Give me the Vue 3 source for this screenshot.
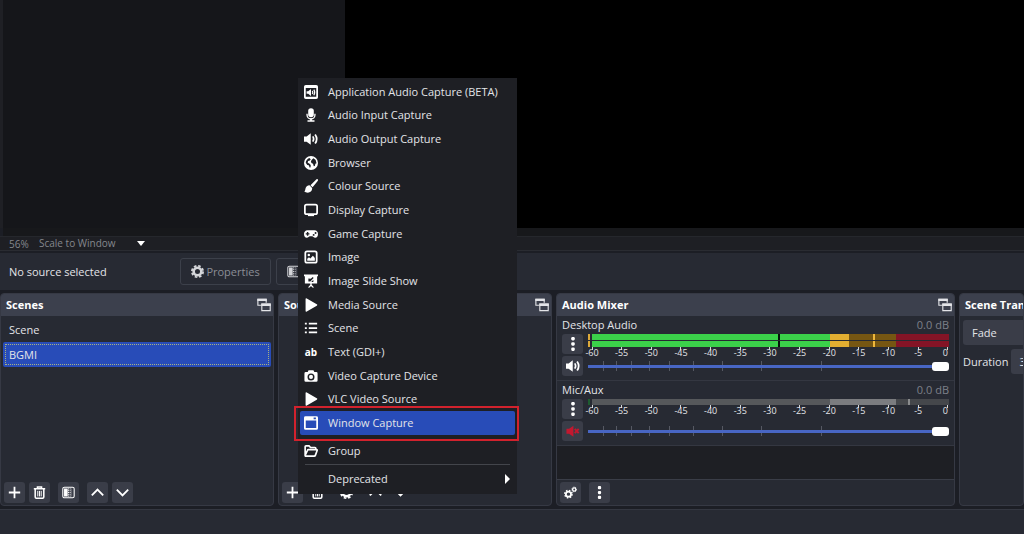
<script setup>
import { ref } from 'vue'

const scenes = ['Scene', 'BGMI']
const currentScene = ref('BGMI')
const highlighted = ref('Window Capture')

const sources = [
  { name: 'Application Audio Capture (BETA)', icon: 'appAudio' },
  { name: 'Audio Input Capture', icon: 'mic' },
  { name: 'Audio Output Capture', icon: 'speaker' },
  { name: 'Browser', icon: 'globe' },
  { name: 'Colour Source', icon: 'brush' },
  { name: 'Display Capture', icon: 'display' },
  { name: 'Game Capture', icon: 'gamepad' },
  { name: 'Image', icon: 'image' },
  { name: 'Image Slide Show', icon: 'slides' },
  { name: 'Media Source', icon: 'play' },
  { name: 'Scene', icon: 'list' },
  { name: 'Text (GDI+)', icon: 'text' },
  { name: 'Video Capture Device', icon: 'camera' },
  { name: 'VLC Video Source', icon: 'play' },
  { name: 'Window Capture', icon: 'window' },
]

const icons = {
  appAudio:
    '<path fill-rule="evenodd" d="M2 0h12a2 2 0 0 1 2 2v12a2 2 0 0 1-2 2H2a2 2 0 0 1-2-2V2a2 2 0 0 1 2-2zM2 3.500v10h12v-10z"/><path d="M3 7h1.800L8 4.500v8L4.800 10H3z"/><path d="M9.400 6.700q1.300 1.800 0 3.600M11.200 5.300q2.200 3.200 0 6.400" fill="none" stroke="currentColor" stroke-width="1.300"/>',
  mic:
    '<rect x="4.800" y="0.300" width="6.400" height="10.400" rx="3.200"/><path d="M3.500 6.500v1.500a4.500 4.500 0 0 0 9 0V6.500" fill="none" stroke="currentColor" stroke-width="1.500"/><path d="M7 12h2v2h3v1.700H4V14h3z"/>',
  speaker:
    '<path d="M0 5h3L7.700 1.500v13L3 11H0z"/><path d="M10 5q2 3 0 6M12.700 2.800q3.600 5.200 0 10.400" fill="none" stroke="currentColor" stroke-width="2"/>',
  muted:
    '<path d="M.5 5.500h3L8.500 2v12.500L3.500 11h-3z"/><path d="M10 5.500l4.500 5M14.500 5.500l-4.500 5" fill="none" stroke="currentColor" stroke-width="2.200"/>',
  globe:
    '<path fill-rule="evenodd" d="M8 0a8 8 0 1 1 0 16A8 8 0 0 1 8 0zM6.200 2.200C3.800 3 2 5.300 2 7.700l1.700 2.500 1.700.3 1.200 2.800.9-.5.200-2.400L6 8.500l-1.800-.7.500-2 2-.6 1-1.400zM9 4.200l1.800-1.700 2.500 2.200 1 3.600-1.300.6-.6 2.600-1.200.3-.9-3-1.800-.7-.6-2z"/>',
  brush:
    '<path d="M15.600.4c.7.700.4 1.600-.2 2.300L9.800 9.400 7.400 7l6.300-6.200c.5-.6 1.300-1 1.900-.4zM6.300 7.200l3 3.200c.3 3-2.100 5.200-4.900 5.200-1.700 0-3.400-.6-4.100-1.600 1.500-.5 1-2.300 1.700-3.900.8-1.700 2.600-3.200 4.300-2.900z"/>',
  display:
    '<rect x="1" y="1.800" width="14" height="11" rx="2" fill="none" stroke="currentColor" stroke-width="2"/><path d="M4.500 13h7v2h-7z"/>',
  gamepad:
    '<path fill-rule="evenodd" d="M4 3.700h8c2.600 0 4 2 4 4.300s-1.200 4.300-3.200 4.300c-1.700 0-2.500-1.600-3.500-1.600H6.700c-1 0-1.800 1.600-3.500 1.600C1.200 12.300 0 10.300 0 8s1.400-4.300 4-4.300zM3.300 5.800v1.300H2v1.600h1.300V10h1.600V8.700h1.300V7.100H4.900V5.800zM11 7.900a1.100 1.100 0 1 0 0 2.200 1.100 1.100 0 0 0 0-2.200zm2.200-2.200a1.100 1.100 0 1 0 0 2.200 1.100 1.100 0 0 0 0-2.200z"/>',
  image:
    '<rect x="1.500" y="1.500" width="13" height="13" rx="2" fill="none" stroke="currentColor" stroke-width="2"/><circle cx="5.500" cy="5.600" r="1.400"/><path d="M3.700 12.300V10l2-1.700 1.500 1.400 3-3 2.200 2.300v3.300z"/>',
  slides:
    '<path fill-rule="evenodd" d="M0 .5h16v2h-1v8.300H1V2.500H0zM5 5v3.700h2.200L11 4.500l-1-1-2.200 2zm3.200 4h2.500V6.600z"/><path d="M7.200 10h1.600v2.200l2.700 3.300H9.600L8 13.700l-1.600 1.800H4.500l2.700-3.300z"/>',
  play: '<path d="M1.800 1.300q0-1.600 1.400-.8l11.400 6.700q1.200.8 0 1.600L3.200 15.500q-1.400.8-1.400-.8z"/>',
  list: '<path d="M1 2h2.200v2H1zM1 7h2.200v2H1zM1 12h2.200v2H1zM5.500 2H15v2H5.500zM5.500 7H15v2H5.500zM5.500 12H15v2H5.500z"/>',
  camera:
    '<path fill-rule="evenodd" d="M5.200 1.500h5.600l1 2H14q1.500 0 1.500 1.500v8q0 1.500-1.500 1.500H2Q.5 14.500.500 13V5Q.5 3.500 2 3.500h2.200zM8 5a4 4 0 1 0 0 8 4 4 0 0 0 0-8z"/><circle cx="8" cy="9" r="2.300"/>',
  window:
    '<path fill-rule="evenodd" d="M1.800.3h12.400Q16 .3 16 2v12q0 1.800-1.800 1.800H1.800Q0 15.800 0 14V2Q0 .3 1.800.3zM2 5.200V13.800h12V5.200zM11 1.700v2h2.600v-2z"/>',
  folder:
    '<path d="M1.300 13V3.200q0-1 1-1h3.500L7.500 4h5q1 0 1 1v1.500M1.300 13l2.500-5.500q.4-1 1.400-1h9.300q.8 0 .5.900l-1.900 5.300q-.4 1.200-1.500 1.200H2q-.7 0-.7-.9z" fill="none" stroke="currentColor" stroke-width="1.900" stroke-linejoin="round"/>',
  plus: '<path d="M8 1v14M1 8h14" fill="none" stroke="currentColor" stroke-width="2.200"/>',
  trash:
    '<path d="M1 3.300h14M5.500 2.800V1.200h5v1.600M2.700 4v9.500q0 1.500 1.500 1.500h7.600q1.500 0 1.500-1.500V4" fill="none" stroke="currentColor" stroke-width="1.900"/><path d="M5.900 6v6.800M8 6v6.800M10.100 6v6.800" fill="none" stroke="currentColor" stroke-width="1.200"/>',
  filter:
    '<rect x="1" y="1.500" width="14" height="13" rx="2" fill="none" stroke="currentColor" stroke-width="1.300"/><path d="M2.500 3H7v10H2.500z"/><path d="M8 3v10M10 3v10" fill="none" stroke="currentColor" stroke-width="1.200" stroke-dasharray="1.200 1"/><path d="M11.500 3v10" stroke="currentColor" opacity=".3"/>',
  up: '<path d="M1 11.500l7-7 7 7" fill="none" stroke="currentColor" stroke-width="2.300"/>',
  down: '<path d="M1 4.500l7 7 7-7" fill="none" stroke="currentColor" stroke-width="2.300"/>',
  gear:
    '<circle cx="8" cy="8" r="4.700" fill="none" stroke="currentColor" stroke-width="3.200"/><circle cx="8" cy="8" r="6.900" fill="none" stroke="currentColor" stroke-width="2.200" stroke-dasharray="3.200 2.219"/>',
  gears:
    '<circle cx="5.500" cy="10" r="3.200" fill="none" stroke="currentColor" stroke-width="2.200"/><circle cx="5.500" cy="10" r="4.600" fill="none" stroke="currentColor" stroke-width="1.800" stroke-dasharray="1.800 1.813"/><circle cx="12.600" cy="4.200" r="2" fill="none" stroke="currentColor" stroke-width="1.600"/><circle cx="12.600" cy="4.200" r="2.900" fill="none" stroke="currentColor" stroke-width="1.200" stroke-dasharray="1.139 1.139"/>',
  dots: '<rect x="6" y="0" width="4" height="4" rx="1.300"/><rect x="6" y="6" width="4" height="4" rx="1.300"/><rect x="6" y="12" width="4" height="4" rx="1.300"/>',
  popout:
    '<path d="M4.500 8.300H1V1.500h9.500v4" fill="none" stroke="currentColor" stroke-width="1.300"/><path d="M.4.800h10.700v2.700H.4z"/><path d="M5.500 7h9.600v7.500H5.500z" fill="none" stroke="currentColor" stroke-width="1.300"/><path d="M4.900 6.300h10.900V9H4.900z"/>',
}

const scale = ['-60', '-55', '-50', '-45', '-40', '-35', '-30', '-25', '-20', '-15', '-10', '-5', '0']
const notches = [4.2, 7.8, 12, 16.8, 22.5, 29, 37.2, 48, 64.6]
const channels = ref([
  { id: 'desktop', name: 'Desktop Audio', muted: false, volume: 100 },
  { id: 'mic', name: 'Mic/Aux', muted: true, volume: 100 },
])
</script>

<template>
  <div class="app">
    <main class="preview">
      <div class="margin"></div>
      <div class="canvas"></div>
    </main>
    <div class="scroll"></div>

    <div class="zoom">
      <span class="percent">56%</span>
      <select class="scaling" aria-label="Preview scaling">
        <option>Scale to Window</option>
      </select>
      <span class="caret"></span>
    </div>

    <section class="context">
      <span class="status">No source selected</span>
      <button class="outlined properties" type="button">
        <svg viewBox="0 0 16 16" v-html="icons.gear"></svg>Properties
      </button>
      <button class="outlined filters" type="button" aria-label="Filters">
        <svg viewBox="0 0 16 16" v-html="icons.filter"></svg>
      </button>
    </section>

    <div class="docks">
      <section class="dock">
        <header>
          <h2>Scenes</h2>
          <svg viewBox="0 0 16 16" v-html="icons.popout"></svg>
        </header>
        <div class="scenes">
          <button
            v-for="s in scenes"
            :key="s"
            type="button"
            :class="{ selected: s === currentScene }"
            @click="currentScene = s"
          ><span>{{ s }}</span></button>
        </div>
        <footer>
          <button type="button" aria-label="Add scene"><svg viewBox="0 0 16 16" v-html="icons.plus"></svg></button>
          <button type="button" aria-label="Remove scene"><svg viewBox="0 0 16 16" v-html="icons.trash"></svg></button>
          <button class="group" type="button" aria-label="Scene filters"><svg viewBox="0 0 16 16" v-html="icons.filter"></svg></button>
          <button class="group" type="button" aria-label="Move scene up"><svg viewBox="0 0 16 16" v-html="icons.up"></svg></button>
          <button type="button" aria-label="Move scene down"><svg viewBox="0 0 16 16" v-html="icons.down"></svg></button>
        </footer>
      </section>

      <section class="dock">
        <header>
          <h2>Sources</h2>
          <svg viewBox="0 0 16 16" v-html="icons.popout"></svg>
        </header>
        <div class="fill"></div>
        <footer class="plain">
          <button class="raised" type="button" aria-label="Add source"><svg viewBox="0 0 16 16" v-html="icons.plus"></svg></button>
          <button type="button" aria-label="Remove source"><svg viewBox="0 0 16 16" v-html="icons.trash"></svg></button>
          <button class="group" type="button" aria-label="Source properties"><svg viewBox="0 0 16 16" v-html="icons.gear"></svg></button>
          <button class="group" type="button" aria-label="Move source up"><svg viewBox="0 0 16 16" v-html="icons.up"></svg></button>
          <button type="button" aria-label="Move source down"><svg viewBox="0 0 16 16" v-html="icons.down"></svg></button>
        </footer>
      </section>

      <section class="dock mixer">
        <header>
          <h2>Audio Mixer</h2>
          <svg viewBox="0 0 16 16" v-html="icons.popout"></svg>
        </header>
        <div v-for="c in channels" :key="c.id" class="channel" :class="c.id">
          <div class="heading">
            <label :for="c.id">{{ c.name }}</label>
            <span class="db">0.0 dB</span>
          </div>
          <div class="controls">
            <div class="side">
              <button type="button" :aria-label="c.name + ' options'">
                <svg viewBox="0 0 16 16" v-html="icons.dots"></svg>
              </button>
              <button type="button" :class="{ muted: c.muted }" :aria-label="'Mute ' + c.name" @click="c.muted = !c.muted">
                <svg viewBox="0 0 16 16" v-html="c.muted ? icons.muted : icons.speaker"></svg>
              </button>
            </div>
            <div class="levels">
              <div class="meter">
                <i class="clip"></i>
                <i class="bar"></i>
                <i v-if="c.id === 'desktop'" class="clip"></i>
                <i v-if="c.id === 'desktop'" class="bar"></i>
              </div>
              <div class="scale">
                <span v-for="n in scale" :key="n"><b>{{ n }}</b></span>
              </div>
              <div class="fader">
                <i v-for="n in notches" :key="n" :style="{ left: n + '%' }"></i>
                <input :id="c.id" v-model="c.volume" type="range" min="0" max="100" />
              </div>
            </div>
          </div>
        </div>
        <div class="void"></div>
        <footer>
          <button type="button" aria-label="Advanced audio properties"><svg viewBox="0 0 16 16" v-html="icons.gears"></svg></button>
          <button class="group" type="button" aria-label="Mixer menu"><svg viewBox="0 0 16 16" v-html="icons.dots"></svg></button>
        </footer>
      </section>

      <section class="dock transitions">
        <header><h2>Scene Transitions</h2></header>
        <div class="form">
          <select aria-label="Transition"><option>Fade</option></select>
          <div class="duration">
            <label for="duration">Duration</label>
            <input id="duration" type="text" value="300 ms" />
          </div>
        </div>
      </section>
    </div>

    <div class="statusbar"></div>

    <div class="menu" role="menu">
      <div class="types">
        <button
          v-for="s in sources"
          :key="s.name"
          type="button"
          role="menuitem"
          :class="{ active: s.name === highlighted }"
        >
          <b v-if="s.icon === 'text'" class="glyph">ab</b>
          <svg v-else viewBox="0 0 16 16" v-html="icons[s.icon]"></svg>
          <span>{{ s.name }}</span>
        </button>
      </div>
      <button type="button" role="menuitem">
        <svg viewBox="0 0 16 16" v-html="icons.folder"></svg><span>Group</span>
      </button>
      <hr />
      <button class="deprecated" type="button" role="menuitem">
        <span>Deprecated</span><i class="arrow"></i>
      </button>
      <div class="marker"></div>
    </div>
  </div>
</template>

<style>
body {
  background: #1e2026;
}
</style>

<style scoped>
.app {
  position: relative;
  display: flex;
  flex-direction: column;
  height: 100vh;
  overflow: hidden;
  background: #1c1e25;
  color: #e3e4e8;
  font: 11px/16px "Open Sans", "Noto Sans", sans-serif;
}
.app * {
  box-sizing: border-box;
}
svg {
  display: block;
  flex: none;
  width: 14px;
  height: 14px;
  fill: currentColor;
}
button,
select,
input {
  margin: 0;
  padding: 0;
  border: 0;
  background: none;
  color: inherit;
  font: inherit;
  appearance: none;
}
h2 {
  margin: 0;
  font: inherit;
  font-weight: 700;
  color: #fff;
  white-space: nowrap;
}
.preview {
  flex: 1;
  display: flex;
  min-height: 0;
  border-left: 3px solid #1f2025;
}
.margin {
  width: 342px;
  background: #15161a;
}
.canvas {
  flex: 1;
  background: #000;
}
.scroll {
  height: 8px;
  margin-left: 3px;
  background: #17181b;
}
.zoom {
  display: flex;
  align-items: center;
  height: 15px;
  border-top: 1px solid #25272c;
  border-bottom: 1px solid #2a2c32;
  background: #1e1f24;
  color: #85878d;
  font-size: 10px;
}
.percent {
  width: 39px;
  padding-left: 9px;
}
.scaling {
  width: 98px;
  line-height: 13px;
}
.caret {
  border: 4px solid transparent;
  border-top: 5px solid #fff;
  border-bottom: 0;
}
.context {
  display: flex;
  align-items: center;
  height: 37px;
  margin: 2px 0 3px;
  padding: 0 9px;
  background: #272a33;
}
.status {
  width: 171px;
}
.outlined {
  display: flex;
  align-items: center;
  justify-content: center;
  gap: 2px;
  height: 27px;
  border: 1px solid #3c404a;
  border-radius: 3px;
  color: #8b8e96;
}
.outlined svg {
  width: 13px;
  height: 13px;
  color: #d5d6da;
}
.properties {
  width: 91px;
}
.filters {
  width: 35px;
  margin-left: 5px;
}
.docks {
  display: grid;
  grid-template-columns: 274px 274px 1fr 65px;
  gap: 4px;
  height: 213px;
}
.dock {
  display: flex;
  flex-direction: column;
  min-width: 0;
  overflow: hidden;
  border: 1px solid #363944;
  border-radius: 4px;
  background: #272a33;
}
.dock header {
  display: flex;
  align-items: center;
  justify-content: space-between;
  flex: none;
  height: 22px;
  padding: 0 2px 0 5px;
  background: #3c404d;
}
.scenes {
  flex: 1;
  display: flex;
  flex-direction: column;
  padding: 1px 2px;
}
.scenes button {
  height: 25px;
  padding: 2px;
  border-radius: 2px;
  text-align: left;
}
.scenes span {
  display: block;
  padding: 2px 3px;
  border: 1px solid transparent;
  line-height: 15px;
}
.scenes .selected {
  background: #284cb8;
}
.scenes .selected span {
  border: 1px dotted #a9b27f;
}
.fill {
  flex: 1;
}
footer {
  display: flex;
  align-items: center;
  gap: 4px;
  flex: none;
  height: 25px;
  padding: 0 3px;
}
footer button,
.side button {
  display: flex;
  align-items: center;
  justify-content: center;
  width: 21px;
  height: 21px;
  border-radius: 3px;
  background: #3a3d48;
  color: #fff;
}
footer svg {
  width: 13px;
  height: 13px;
}
footer .group {
  margin-left: 4px;
}
.plain button {
  background: none;
}
.plain .raised {
  background: #3a3d48;
}
.channel {
  flex: none;
  height: 65px;
  padding: 1px 5px 0;
  border-bottom: 1px solid #343741;
}
.heading {
  display: flex;
  justify-content: space-between;
}
.db {
  color: #7d8089;
}
.controls {
  display: flex;
  gap: 5px;
  margin-top: 1px;
}
.side {
  display: flex;
  flex-direction: column;
  gap: 2px;
}
.side button {
  height: 20px;
}
.side .muted {
  color: #c2182f;
}
.levels {
  flex: 1;
  min-width: 0;
}
.meter {
  display: grid;
  grid-template-columns: 2px 1fr;
  gap: 1px 2px;
}
.clip,
.bar {
  height: 6px;
}
.clip {
  background: #dca93a;
}
.bar {
  background: linear-gradient(
    90deg,
    #3bd14a 52%,
    #05140a 52% 52.6%,
    #3bd14a 52.6% 66.6%,
    #e2ae31 66.6% 72%,
    #765612 72% 78.6%,
    #eeb73c 78.6% 79.4%,
    #765612 79.4% 85.2%,
    #841426 85.2%
  );
}
.mic .clip {
  background: #1d5c30;
}
.mic .bar {
  background: linear-gradient(
    90deg,
    #56585b 66.6%,
    #7b7c7f 66.6% 85.2%,
    #45474b 85.2% 88.6%,
    #8a8b8d 88.6% 89.2%,
    #45474b 89.2%
  );
}
.scale {
  display: flex;
  justify-content: space-between;
  height: 13px;
  padding: 0 1px 0 4px;
  font-size: 9px;
  line-height: 12px;
}
.scale span {
  display: flex;
  flex-direction: column;
  align-items: center;
  width: 0;
}
.scale span::before {
  content: "";
  flex: none;
  width: 1px;
  height: 3px;
  background: #d5d6da;
}
.scale b {
  margin-top: -3px;
  font-weight: 400;
}
.scale span:last-child {
  align-items: flex-end;
}
.fader {
  position: relative;
  height: 11px;
  margin-top: 1px;
}
.mic .fader {
  margin-top: 8px;
}
.fader i {
  position: absolute;
  top: 0;
  width: 1px;
  height: 10px;
  background: #565963;
}
.fader input {
  position: relative;
  display: block;
  width: 100%;
  height: 10px;
  background: linear-gradient(#4866c4, #4866c4) center / 100% 3px no-repeat;
}
.fader input::-webkit-slider-thumb {
  appearance: none;
  width: 17px;
  height: 9px;
  border-radius: 3px;
  background: #fff;
}
.void {
  flex: 1;
  border-bottom: 1px solid #3a3d47;
  background: #1e1f24;
}
.form {
  width: 160px;
  padding: 4px 3px;
}
.form select {
  display: block;
  width: 100%;
  height: 25px;
  padding: 0 9px;
  border-radius: 3px;
  background: #3a3d48;
}
.duration {
  display: flex;
  align-items: center;
  gap: 3px;
  margin-top: 4px;
}
.duration input {
  flex: 1;
  min-width: 0;
  height: 25px;
  padding: 0 8px;
  border-radius: 3px;
  background: #3a3d48;
}
.statusbar {
  height: 25px;
  margin-top: 3px;
  border-top: 1px solid #343741;
  background: #272a33;
}
.menu {
  position: absolute;
  left: 298px;
  bottom: 40px;
  width: 219px;
  padding: 2px 2px 3px;
  background: #1e1f24;
}
.types {
  display: grid;
  grid-template-rows: repeat(15, 1fr);
  height: 355px;
}
.menu button {
  display: flex;
  align-items: center;
  gap: 10px;
  width: 215px;
  padding: 0 4px;
  border-radius: 2px;
  white-space: nowrap;
}
.menu svg {
  color: #fff;
}
.menu .active {
  background: #284cb8;
}
.menu > button {
  height: 24px;
  margin-top: 4px;
}
.menu hr {
  height: 1px;
  margin: 1px 5px;
  border: 0;
  background: #43454b;
}
.menu .deprecated {
  margin-top: 2px;
  padding: 0 5px 0 28px;
  justify-content: space-between;
}
.glyph {
  width: 14px;
  color: #fff;
  font-size: 10px;
}
.arrow {
  border: 5px solid transparent;
  border-left-color: #fff;
  border-right: 0;
}
.marker {
  position: absolute;
  left: -4px;
  right: -2px;
  bottom: 53px;
  height: 35px;
  border: 2px solid #d2222d;
  pointer-events: none;
}
</style>
